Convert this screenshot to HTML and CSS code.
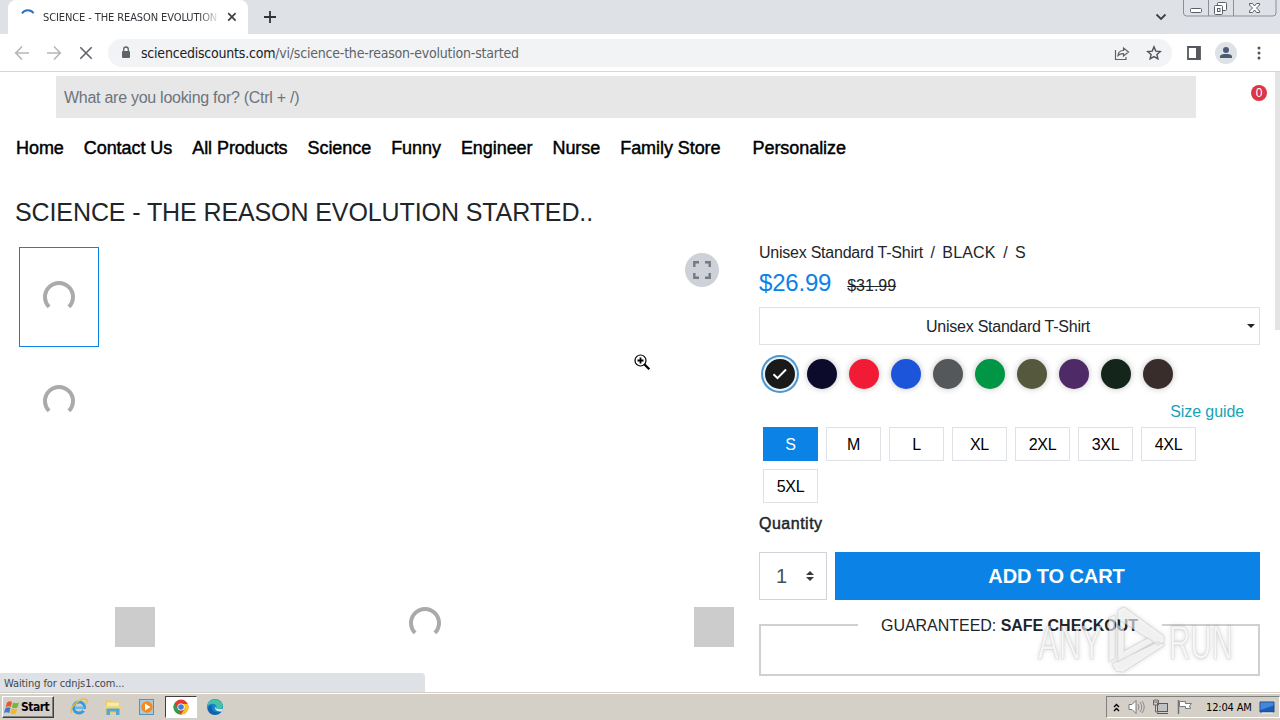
FILE: index.html
```html
<!DOCTYPE html>
<html lang="en">
<head>
    <meta charset="UTF-8">
    <meta name="viewport" content="width=device-width, initial-scale=1.0">
    <title>SCIENCE - THE REASON EVOLUTION STARTED</title>
    <link rel="stylesheet" href="styles.css">
</head>
<body>
    <div class="screen">
        <!-- Browser tabs -->
        <div class="tabstrip">
            <div class="tab">
                <svg class="tab-spinner" width="16" height="16" viewBox="0 0 16 16"><path d="M2 4.500A7 7 0 0 1 13.600 4.200" fill="none" stroke="#2f74c0" stroke-width="1.800"/></svg>
                <span class="tab-title">SCIENCE - THE REASON EVOLUTION</span>
                <svg class="tab-close" width="10" height="10" viewBox="0 0 10 10"><path d="M1.200 1.200l7.400 7.400M8.600 1.200L1.200 8.600" stroke="#3c4043" stroke-width="1.700"/></svg>
            </div>
            <svg class="new-tab" width="12" height="12" viewBox="0 0 12 12"><path d="M6 0v12M0 6h12" stroke="#303438" stroke-width="1.800"/></svg>
            <svg class="tab-search" width="12" height="8" viewBox="0 0 12 8"><path d="M1.500 1.500L6 6l4.500-4.500" fill="none" stroke="#3c4043" stroke-width="1.800"/></svg>
            <svg class="window-buttons" width="94" height="17" viewBox="0 0 94 17">
                <path d="M.5 0v13q0 3 3 3H90q3 0 3-3V0M25.500 0v16M50.500 0v16" fill="none" stroke="#8b8f98"/>
                <rect x="7.500" y="8.500" width="11" height="4" rx="1" fill="#fff" stroke="#5b5e66"/>
                <rect x="34.500" y="2.500" width="9" height="8" rx="1" fill="#fff" stroke="#5b5e66"/>
                <rect x="31.500" y="5.500" width="8" height="9" rx="1" fill="#fff" stroke="#5b5e66"/>
                <rect x="34.500" y="8.500" width="2.500" height="3" fill="#fff" stroke="#5b5e66"/>
                <path d="M66.500 3.500h3l2 2.500 2-2.500h3v1.500l-3 3 3 3v1.500h-3l-2-2.500-2 2.500h-3V11l3-3-3-3z" fill="#fff" stroke="#5b5e66"/>
            </svg>
        </div>

        <!-- Address bar -->
        <div class="toolbar">
            <div class="nav-buttons">
                <svg width="16" height="16" viewBox="0 0 16 16"><path d="M15 8H2M8 1.500L1.700 8 8 14.500" fill="none" stroke="#b4b6b9" stroke-width="1.600"/></svg>
                <svg width="16" height="16" viewBox="0 0 16 16"><path d="M1 8h13M8 1.500L14.300 8 8 14.500" fill="none" stroke="#b4b6b9" stroke-width="1.600"/></svg>
                <svg width="16" height="16" viewBox="0 0 16 16"><path d="M2.300 2.300l11.400 11.400M13.700 2.300L2.300 13.700" stroke="#5f6368" stroke-width="1.600"/></svg>
            </div>
            <div class="omnibox">
                <svg class="lock" width="10" height="13" viewBox="0 0 10 13"><rect x="1" y="5" width="8" height="7" rx="1" fill="#5f6368"/><path d="M2.700 5V3.300a2.300 2.300 0 0 1 4.600 0V5" fill="none" stroke="#5f6368" stroke-width="1.300"/></svg>
                <span class="url"><span class="host">sciencediscounts.com</span>/vi/science-the-reason-evolution-started</span>
                <svg class="share" width="16" height="16" viewBox="0 0 16 16"><path d="M1.500 5v9.500H12V12" fill="none" stroke="#5f6368" stroke-width="1.200"/><path d="M4 10.500c.4-3.700 2.500-5 5.500-5V3L14.500 7l-5 4V8.700C7.300 8.600 5.500 9 4 10.500z" fill="none" stroke="#5f6368" stroke-width="1.200"/></svg>
                <svg class="star" width="16" height="16" viewBox="0 0 16 16"><path d="M8 1.900l1.800 4.200 4.500.4-3.400 3 1 4.400L8 11.600 4.100 13.900l1-4.400-3.400-3 4.500-.4z" fill="none" stroke="#505459" stroke-width="1.400"/></svg>
            </div>
            <svg class="side-panel" width="14" height="14" viewBox="0 0 14 14"><path d="M1 1h12v12H1z" fill="#fff" stroke="#55585c" stroke-width="1.800"/><path d="M9 1h4v12H9z" fill="#55585c"/></svg>
            <svg class="profile" width="22" height="22" viewBox="0 0 22 22"><circle cx="11" cy="11" r="11" fill="#dee1e6"/><circle cx="11" cy="8" r="3" fill="#4c5b75"/><path d="M5 16v-1.500C5 12.500 8.500 12 11 12s6 .5 6 2.500V16z" fill="#4c5b75"/></svg>
            <svg class="kebab" width="4" height="14" viewBox="0 0 4 14"><g fill="#505459"><circle cx="2" cy="2" r="1.500"/><circle cx="2" cy="7" r="1.500"/><circle cx="2" cy="12" r="1.500"/></g></svg>
        </div>

        <!-- Store page -->
        <div class="page">
            <div class="search-row">
                <div class="search">What are you looking for? (Ctrl + /)</div>
                <span class="cart-count">0</span>
            </div>
            <nav class="menu">
                <a>Home</a>
                <a>Contact Us</a>
                <a>All Products</a>
                <a>Science</a>
                <a>Funny</a>
                <a>Engineer</a>
                <a>Nurse</a>
                <a>Family Store</a>
                <a class="personalize">Personalize</a>
            </nav>
            <h1>SCIENCE - THE REASON EVOLUTION STARTED..</h1>

            <div class="product">
                <div class="thumbs">
                    <div class="thumb active"><svg class="loader" width="32" height="32" viewBox="0 0 32 32"><path d="M6.100 25.900A14 14 0 1 1 25.900 25.900"/></svg></div>
                    <div class="thumb"><svg class="loader" width="32" height="32" viewBox="0 0 32 32"><path d="M6.100 25.900A14 14 0 1 1 25.900 25.900"/></svg></div>
                </div>
                <div class="viewer">
                    <div class="expand">
                        <svg width="20" height="20" viewBox="0 0 20 20"><path d="M2.300 7V2.300H7M13 2.300h4.700V7M17.700 13v4.700H13M7 17.700H2.300V13" fill="none" stroke="#757a80" stroke-width="2.400"/></svg>
                    </div>
                    <div class="slider">
                        <span class="slide-button"></span>
                        <svg class="loader" width="32" height="32" viewBox="0 0 32 32"><path d="M6.100 25.900A14 14 0 1 1 25.900 25.900"/></svg>
                        <span class="slide-button"></span>
                    </div>
                </div>

                <div class="details">
                    <div class="variant"><span>Unisex Standard T-Shirt</span><span>/</span><span class="color-name">BLACK</span><span>/</span><span>S</span></div>
                    <div class="prices"><span class="price">$26.99</span><span class="old-price">$31.99</span></div>
                    <div class="style-select"><span>Unisex Standard T-Shirt</span><i class="caret"></i></div>
                    <div class="swatches">
                        <span class="swatch black"><svg width="16" height="12" viewBox="0 0 16 12"><path d="M1.500 6.200l4 4L14 1.500" fill="none" stroke="#fff" stroke-width="2"/></svg></span>
                        <span class="swatch navy"></span>
                        <span class="swatch red"></span>
                        <span class="swatch royal"></span>
                        <span class="swatch charcoal"></span>
                        <span class="swatch green"></span>
                        <span class="swatch olive"></span>
                        <span class="swatch purple"></span>
                        <span class="swatch forest"></span>
                        <span class="swatch brown"></span>
                    </div>
                    <a class="size-guide">Size guide</a>
                    <div class="sizes">
                        <span class="size selected">S</span>
                        <span class="size">M</span>
                        <span class="size">L</span>
                        <span class="size">XL</span>
                        <span class="size">2XL</span>
                        <span class="size">3XL</span>
                        <span class="size">4XL</span>
                        <span class="size">5XL</span>
                    </div>
                    <div class="quantity-label">Quantity</div>
                    <div class="buy">
                        <div class="quantity"><span>1</span><svg width="8" height="10" viewBox="0 0 8 10"><path d="M0 4l4-4 4 4zM0 6l4 4 4-4z" fill="#343a40"/></svg></div>
                        <button class="add-to-cart">ADD TO CART</button>
                    </div>
                    <fieldset class="checkout">
                        <legend>GUARANTEED: <b>SAFE CHECKOUT</b></legend>
                    </fieldset>
                </div>
            </div>
            <div class="scroll-thumb"></div>
            <div class="status">Waiting for cdnjs1.com...</div>
        </div>

        <!-- Taskbar -->
        <div class="taskbar">
            <div class="start">
                <svg width="16" height="15" viewBox="0 0 16 15"><path d="M3 2.500Q5.500.5 8 2L6.800 7Q4 5.500 1.500 7.500z" fill="#e8582a"/><path d="M9 2.500Q11.500 4 15 2.500L13.500 7.500Q10.500 9 7.800 7.500z" fill="#76b83f"/><path d="M1.200 8.500Q4 6.500 6.500 8L5.200 13Q2.500 11.500 0 13z" fill="#3a7bd0"/><path d="M7.500 8.500Q10 10 13.200 8.700L12 13.500Q9 15 6.200 13.500z" fill="#f2b92b"/></svg>
                <span>Start</span>
            </div>
            <div class="launchers">
                <span class="task"><svg width="18" height="18" viewBox="0 0 18 18"><circle cx="9" cy="9.500" r="5.500" fill="none" stroke="#3a9bdc" stroke-width="3"/><path d="M5 8.500h9v2.500H5z" fill="#66b9eb"/><path d="M13 11h4v2h-4z" fill="#d4d0c8"/><path d="M2 15Q-1 11 6 5T17 2q1 1-1 4" fill="none" stroke="#edbd3a" stroke-width="1.300"/></svg></span>
                <span class="task"><svg width="18" height="18" viewBox="0 0 18 18"><path d="M1.500 2.500h5l1 1.500h8v11h-14z" fill="#efcb60"/><path d="M3 4.500h12v4H3z" fill="#f8e9a8"/><path d="M1 8h16v3H1z" fill="#f0d77e"/><path d="M2.500 17v-6.500h13V17H12v-3.500H6V17z" fill="#57a6d2"/></svg></span>
                <span class="task"><svg width="18" height="18" viewBox="0 0 18 18"><rect x="1.500" y="1.500" width="14" height="15" fill="#aac8df" stroke="#5a91bc"/><circle cx="9" cy="9" r="5.700" fill="#f38b1b"/><path d="M7 5.500v7L12.500 9z" fill="#fff"/></svg></span>
                <span class="task running"><svg width="16" height="16" viewBox="0 0 16 16"><circle cx="8" cy="8" r="7.500" fill="#e33b2e"/><path d="M1.500 4.300L5.500 11l2.500 4.500A7.500 7.500 0 0 1 1.500 4.300z" fill="#2b9f4b"/><path d="M14.900 5H8l3.500 5L8 15.500A7.500 7.500 0 0 0 14.900 5z" fill="#f9c518"/><circle cx="8" cy="8" r="3.600" fill="#fff"/><circle cx="8" cy="8" r="2.800" fill="#3b7de0"/></svg></span>
                <span class="task"><svg width="18" height="18" viewBox="0 0 18 18"><circle cx="9" cy="9" r="8" fill="#1684cf"/><path d="M1.200 8C2.500 1 10 0 14 3.200c4 3.500 3.500 8-1.500 8-3 0-2.500-1-2-2C11 6 6 4 1.200 8z" fill="#42c5a0"/><path d="M6 7c-2 6 4 9 9.500 6.500C12 18 5 18 2.500 13 1.500 10 3 7.500 6 7z" fill="#155faa"/><path d="M9.500 7.500c-1 3 2 4.500 7.500 3.200l-1.500 2.700C11 14 7.500 11 9.500 7.500z" fill="#d6ecf2"/></svg></span>
            </div>
            <div class="tray">
                <svg width="7" height="9" viewBox="0 0 7 9"><path d="M1 4l2.500-2.500L6 4M1 8l2.500-2.500L6 8" fill="none" stroke="#000" stroke-width="1.400"/></svg>
                <svg class="volume" width="17" height="16" viewBox="0 0 17 16"><path d="M1 5.500h3l4-4v13l-4-4H1z" fill="#fff" stroke="#77787a"/><path d="M10 5q2 3 0 6M12 3q3.500 5 0 10M14 2q4.500 6 0 12" fill="none" stroke="#8c8d8f"/></svg>
                <svg class="network" width="17" height="16" viewBox="0 0 17 16"><rect x="5.500" y="4.500" width="10" height="8" fill="#bfc2c3" stroke="#55585a"/><path d="M5 14.500h11" stroke="#55585a"/><path d="M1.500 1v5h5V1M3 0v4M5 0v4M3.500 6v7h3" fill="none" stroke="#66686a"/></svg>
                <svg class="flag" width="17" height="16" viewBox="0 0 17 16"><path d="M2.500 1v14" stroke="#707274" stroke-width="1.500"/><path d="M3.500 2.500h6v2h6l-2 2.500 1 2.500h-5v-2h-6z" fill="#fff" stroke="#77797a"/></svg>
                <span class="clock">12:04 AM</span>
                <svg class="desktop" width="16" height="13" viewBox="0 0 16 13"><path d="M1 1h14v10H1z" fill="#195bb5" stroke="#284a76"/><path d="M1.500 1.500h13v3L1.500 9z" fill="#4387dc"/><path d="M3 12h11" stroke="#eef3f8"/></svg>
            </div>
        </div>

        <svg class="cursor" width="18" height="18" viewBox="0 0 18 18"><circle cx="6.500" cy="6.500" r="5.500" fill="#fff" stroke="#000" stroke-width="1.200"/><path d="M6.500 3.500v6M3.500 6.500h6" stroke="#000" stroke-width="1.800"/><path d="M10.300 10.300l5 5" stroke="#000" stroke-width="2.300"/></svg>

        <svg class="watermark" width="220" height="76" viewBox="0 0 220 76">
            <g class="mark">
                <text x="8" y="53" textLength="64" lengthAdjust="spacingAndGlyphs">ANY</text>
                <path d="M79 12l6-3v43l-6 4zM88 4l6-3 40 29v6l-6 3-40-26zM88 19l6 4v22l24-13 6 4-36 20zM82 58l46-22 7 3-42 27-7-1z"/>
                <text x="139" y="53" textLength="64" lengthAdjust="spacingAndGlyphs">RUN</text>
            </g>
        </svg>
    </div>
</body>
</html>
```
FILE: styles.css
```css
* {
    box-sizing: border-box;
}
body {
    margin: 0;
    background-color: #fff;
    font-family: "Liberation Sans", Arial, sans-serif;
    font-size: 16px;
    color: #212529;
}
svg {
    display: block;
    flex-shrink: 0;
}
.screen {
    position: relative;
    display: flex;
    flex-direction: column;
    width: 1280px;
    height: 720px;
    overflow: hidden;
}

/* Browser */
.tabstrip {
    display: flex;
    align-items: center;
    height: 34px;
    background-color: #dee1e6;
}
.tab {
    display: flex;
    align-items: center;
    width: 240px;
    height: 34px;
    margin-left: 8px;
    padding: 0 11px 0 12px;
    background-color: #fff;
    border-radius: 8px 8px 0 0;
}
.tab-title {
    width: 177px;
    margin: 0 7px 0 7px;
    white-space: nowrap;
    font-family: "DejaVu Sans Condensed", "DejaVu Sans", sans-serif;
    font-size: 11px;
    letter-spacing: -0.1px;
    color: #303338;
    -webkit-mask-image: linear-gradient(90deg, #000 88%, transparent);
    mask-image: linear-gradient(90deg, #000 88%, transparent);
}
.new-tab {
    margin-left: 16px;
}
.tab-search {
    margin-left: auto;
}
.window-buttons {
    align-self: flex-start;
    margin: 0 3px 0 16px;
}
.toolbar {
    display: flex;
    align-items: center;
    height: 38px;
    border-bottom: 1px solid #d5d7da;
    background-color: #fff;
}
.nav-buttons {
    display: flex;
    gap: 16px;
    margin-left: 14px;
}
.omnibox {
    display: flex;
    align-items: center;
    width: 1064px;
    height: 28px;
    margin-left: 14px;
    padding: 0 10px 0 13px;
    border-radius: 14px;
    background-color: #f1f3f4;
}
.url {
    margin-left: 10px;
    white-space: nowrap;
    font-family: "DejaVu Sans Condensed", "DejaVu Sans", sans-serif;
    font-size: 14px;
    letter-spacing: -0.21px;
    color: #5f6368;
}
.host {
    color: #202124;
}
.share {
    margin-left: auto;
}
.star {
    margin-left: 16px;
}
.side-panel {
    margin-left: 15px;
}
.profile {
    margin-left: 14px;
}
.kebab {
    margin-left: 20px;
}

/* Store page */
.page {
    position: relative;
    height: 620px;
    overflow: hidden;
}
.search-row {
    display: flex;
    padding: 4px 0 0 56px;
}
.search {
    width: 1140px;
    height: 42px;
    padding-left: 8px;
    background-color: #e7e7e7;
    line-height: 44px;
    letter-spacing: -0.27px;
    color: #6c757d;
}
.cart-count {
    width: 16px;
    height: 16px;
    margin: 9px 0 0 55px;
    border-radius: 50%;
    background-color: #dc3545;
    color: #fff;
    font-size: 12px;
    line-height: 16px;
    text-align: center;
}
.menu {
    display: flex;
    gap: 20px;
    height: 60px;
    padding-left: 16px;
    font-size: 18px;
    line-height: 60px;
    letter-spacing: -0.06px;
    color: #000;
    -webkit-text-stroke: 0.45px #000;
}
.personalize {
    margin-left: 12px;
}
h1 {
    margin: 19px 0 20px 15px;
    font-size: 25px;
    font-weight: 400;
    line-height: 30px;
    letter-spacing: -0.1px;
}
.product {
    display: flex;
}
.thumbs {
    display: flex;
    flex-direction: column;
    gap: 4px;
    margin-left: 19px;
}
.thumb {
    display: flex;
    align-items: center;
    justify-content: center;
    width: 80px;
    height: 100px;
}
.thumb.active {
    border: 1px solid #0b83e6;
}
.loader path {
    fill: none;
    stroke: #aaa;
    stroke-width: 4;
}
.viewer {
    display: flex;
    flex-direction: column;
    justify-content: space-between;
    width: 619px;
    height: 400px;
    margin-left: 16px;
}
.expand {
    display: flex;
    align-items: center;
    justify-content: center;
    width: 34px;
    height: 34px;
    margin: 6px 15px 0 auto;
    border-radius: 50%;
    background-color: #ced1d7;
}
.slider {
    display: flex;
    justify-content: space-between;
}
.slide-button {
    width: 40px;
    height: 40px;
    background-color: #ccc;
}
.details {
    width: 501px;
    margin: -6px 0 0 25px;
}
.variant {
    display: flex;
    gap: 7.500px;
    height: 24px;
    line-height: 24px;
    letter-spacing: -0.24px;
}
.color-name {
    letter-spacing: 0.2px;
}
.prices {
    display: flex;
    align-items: baseline;
    gap: 16px;
    height: 42px;
    line-height: 36px;
}
.price {
    font-size: 24px;
    letter-spacing: -0.2px;
    color: #0b83e6;
}
.old-price {
    text-decoration: line-through;
}
.style-select {
    display: flex;
    align-items: center;
    height: 38px;
    border: 1px solid #dee2e6;
    letter-spacing: -0.24px;
}
.style-select span {
    flex: 1;
    padding: 2px 0 0 9px;
    text-align: center;
}
.caret {
    margin-right: 4px;
    border-top: 4px solid #212529;
    border-left: 4px solid transparent;
    border-right: 4px solid transparent;
}
.swatches {
    display: flex;
    gap: 12px;
    padding: 14px 0 0 6px;
}
.swatch {
    display: flex;
    align-items: center;
    justify-content: center;
    width: 30px;
    height: 30px;
    border-radius: 50%;
    box-shadow: 0 0 6px rgba(0, 0, 0, 0.25);
}
.swatch.black {
    background-color: #1a1a1a;
    box-shadow: 0 0 0 2px #e6f3fc, 0 0 0 4px #4c96cf;
}
.navy { background-color: #0d0b2b; }
.red { background-color: #f21b35; }
.royal { background-color: #1c55d9; }
.charcoal { background-color: #54585a; }
.green { background-color: #009645; }
.olive { background-color: #55583c; }
.purple { background-color: #4e2a66; }
.forest { background-color: #14261b; }
.brown { background-color: #382d2b; }
.size-guide {
    display: block;
    margin: 11px 16px -1px 0;
    line-height: 24px;
    text-align: right;
    letter-spacing: -0.1px;
    color: #17a2b8;
}
.sizes {
    display: flex;
    flex-wrap: wrap;
    gap: 8px;
    padding: 4px 4px 0;
}
.size {
    width: 55px;
    height: 34px;
    border: 1px solid #dee2e6;
    line-height: 33px;
    text-align: center;
    letter-spacing: -0.3px;
    color: #000;
}
.size.selected {
    border-color: #0b83e6;
    background-color: #0b83e6;
    color: #fff;
}
.quantity-label {
    margin-top: 8px;
    line-height: 25px;
    letter-spacing: 0.5px;
    -webkit-text-stroke: 0.45px #212529;
}
.buy {
    display: flex;
    gap: 8px;
    margin-top: 16px;
}
.quantity {
    display: flex;
    align-items: center;
    justify-content: space-between;
    width: 68px;
    height: 48px;
    padding: 0 12px 0 16px;
    border: 1px solid #ced4da;
    font-size: 20px;
    color: #495057;
}
.add-to-cart {
    flex: 1;
    padding: 0;
    padding-left: 18px;
    border: none;
    background-color: #0b83e6;
    color: #fff;
    font-family: inherit;
    font-size: 20px;
    font-weight: 700;
    letter-spacing: -0.1px;
}
.checkout {
    height: 65px;
    margin: 11px 0 0;
    border: 2px solid #ced0d3;
}
.checkout legend {
    width: 304px;
    margin: 0 auto;
    padding: 2px 0 0;
    line-height: 26px;
    text-align: center;
    white-space: nowrap;
    letter-spacing: -0.03px;
}
.scroll-thumb {
    position: absolute;
    top: 0;
    right: 0;
    width: 5px;
    height: 258px;
    background-color: #e4e4e4;
}
.status {
    position: absolute;
    left: 0;
    bottom: 0;
    width: 425px;
    height: 19px;
    padding-left: 4px;
    border-top-right-radius: 4px;
    background-color: #dee1e6;
    font-family: "DejaVu Sans Condensed", "DejaVu Sans", sans-serif;
    font-size: 11px;
    line-height: 21px;
    letter-spacing: -0.1px;
    color: #45484d;
}

/* Taskbar */
.taskbar {
    display: flex;
    height: 28px;
    padding-top: 2px;
    border-top: 1px solid #d4d0c8;
    background-color: #d4d0c8;
    box-shadow: inset 0 1px 0 #fff;
    font-family: "DejaVu Sans Condensed", "DejaVu Sans", sans-serif;
}
.start {
    display: flex;
    align-items: center;
    gap: 1px;
    width: 52px;
    height: 22px;
    margin: 1px 0 0 2px;
    padding-left: 1px;
    border: 1px solid;
    border-color: #fff #404040 #404040 #fff;
    box-shadow: inset -1px -1px 0 #808080;
    color: #000;
    font-size: 12px;
    font-weight: 700;
    letter-spacing: -0.5px;
}
.launchers {
    display: flex;
    gap: 2px;
    margin-left: 9px;
}
.task {
    display: flex;
    align-items: center;
    justify-content: center;
    width: 32px;
    height: 22px;
    margin-top: 1px;
}
.task.running {
    border: 1px solid;
    border-color: #404040 #fff #fff #404040;
    background-color: #fff;
}
.tray {
    display: flex;
    align-items: center;
    width: 174px;
    height: 22px;
    margin: 1px 0 0 auto;
    padding-left: 6px;
    border: 1px solid;
    border-color: #808080 #fff #fff #808080;
    color: #000;
}
.volume {
    margin-left: 8px;
}
.network,
.flag {
    margin-left: 7px;
}
.clock {
    width: 49px;
    margin-left: 13px;
    white-space: nowrap;
    font-size: 11px;
    letter-spacing: -0.15px;
}
.desktop {
    margin-left: 4px;
}

/* Overlays */
.cursor {
    position: absolute;
    left: 634px;
    top: 354px;
}
.watermark {
    position: absolute;
    left: 1030px;
    top: 606px;
}
.mark {
    fill: rgba(255, 255, 255, 0.6);
    stroke: rgba(150, 150, 150, 0.2);
    stroke-width: 1.2;
    filter: drop-shadow(0 0 2px rgba(0, 0, 0, 0.25));
}
.mark text {
    font-size: 48px;
    font-weight: 400;
}
```
